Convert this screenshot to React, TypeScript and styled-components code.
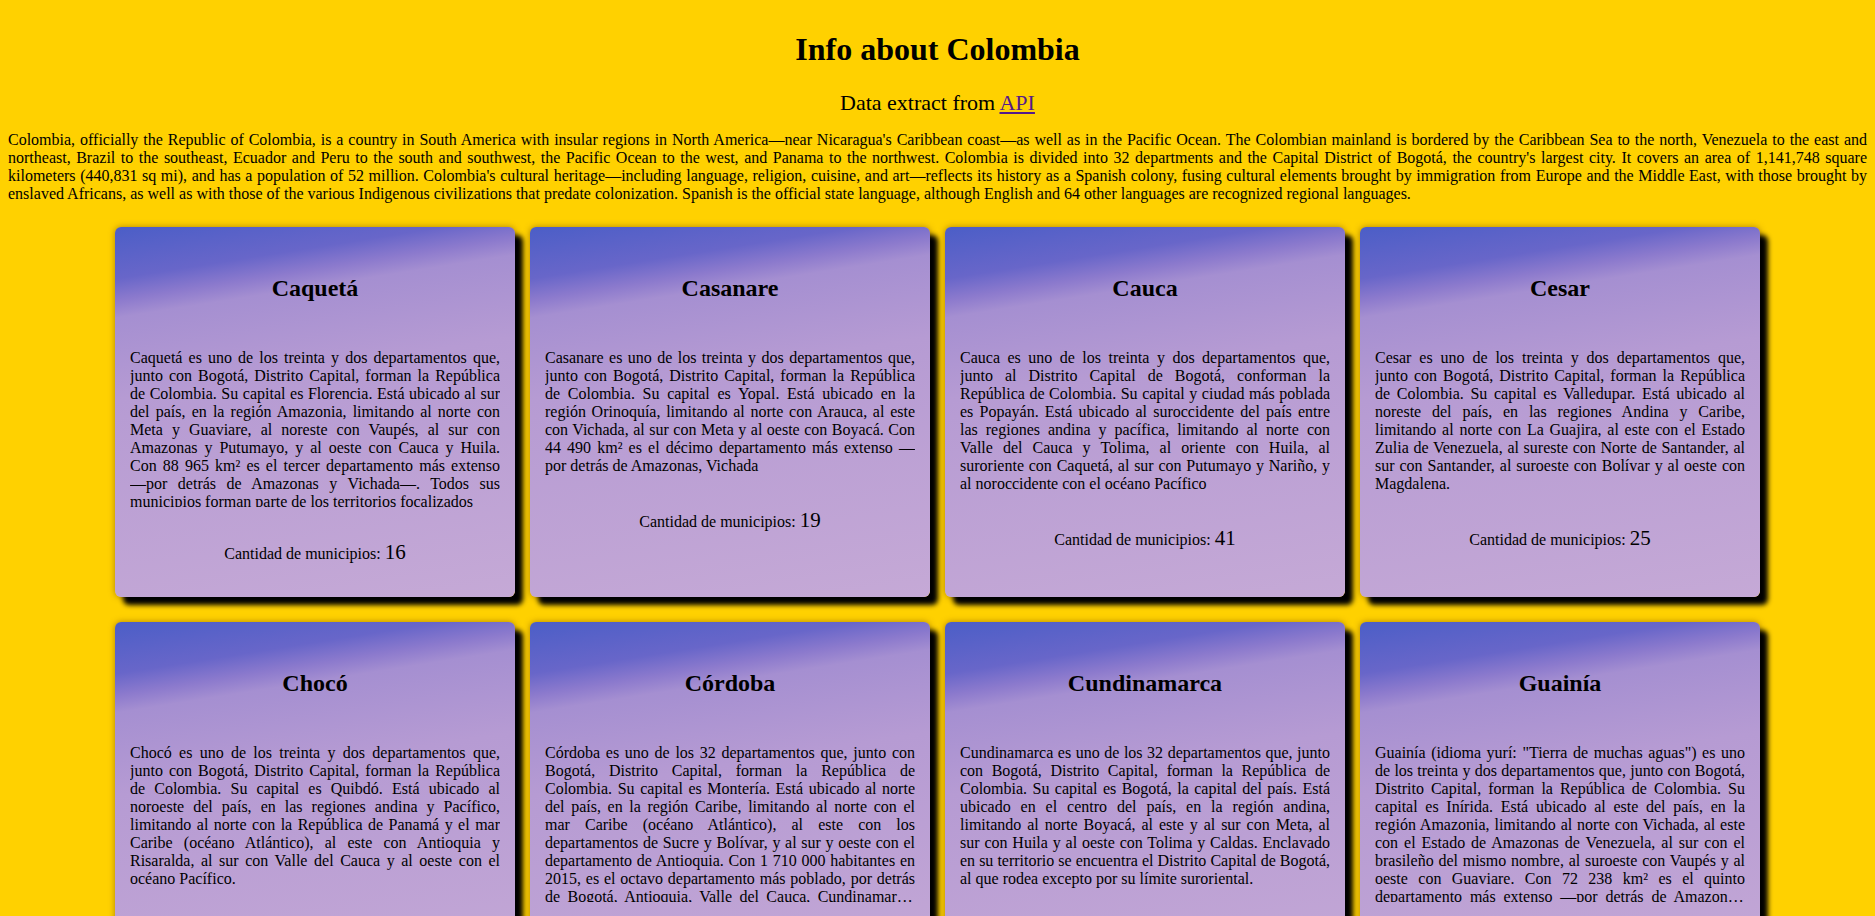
import styled, { createGlobalStyle } from "styled-components"

const GlobalStyle = createGlobalStyle`
    body {
        margin: 0;
        background: #ffd100;
        color: #000;
        font-family: "Liberation Serif", "Times New Roman", serif;
    }
`

const Page = styled.main`
    padding: 0 8px 40px;
`

const Title = styled.h1`
    margin: 31px 0 0;
    font-size: 32px;
    line-height: 37px;
    text-align: center;
`

const Subtitle = styled.p`
    margin: 22px 0 0;
    font-size: 22px;
    line-height: 25px;
    text-align: center;

    a {
        color: #551a8b;
    }
`

const Intro = styled.p`
    margin: 16px 0 0;
    font-size: 16px;
    text-align: justify;
`

const Grid = styled.section`
    display: grid;
    grid-template-columns: repeat(4, 400px);
    justify-content: center;
    gap: 25px 15px;
    margin-top: 24px;
`

const Card = styled.article`
    box-sizing: border-box;
    height: 370px;
    padding: 47px 15px 0;
    border-radius: 6px;
    background: linear-gradient(171deg, #4b5ec7 0%, #6866c9 12%, #8c7acd 17%, #a58fd1 21%, #b69bd3 40%, #c5a9d6 100%);
    box-shadow: 8px 8px 5px #000, 0 0 6px rgba(110, 70, 0, 0.55);
`

const CardTitle = styled.h2`
    margin: 0;
    font-size: 24px;
    line-height: 28px;
    text-align: center;
`

const Description = styled.p`
    margin: 47px 0 0;
    font-size: 16px;
    line-height: 18px;
    text-align: justify;
    display: -webkit-box;
    -webkit-box-orient: vertical;
    -webkit-line-clamp: 9;
    overflow: hidden;
    max-height: 158px;
`

const Count = styled.p`
    margin: 32px 0 0;
    font-size: 16px;
    line-height: 26px;
    text-align: center;

    span {
        font-size: 21px;
    }
`

type Department = {
    name: string
    description: string
    municipalities: number
}

const departments: Department[] = [
    {
        name: "Caquetá",
        description: "Caquetá es uno de los treinta y dos departamentos que, junto con Bogotá, Distrito Capital, forman la República de Colombia. Su capital es Florencia. Está ubicado al sur del país, en la región Amazonia, limitando al norte con Meta y Guaviare, al noreste con Vaupés, al sur con Amazonas y Putumayo, y al oeste con Cauca y Huila. Con 88 965 km² es el tercer departamento más extenso —por detrás de Amazonas y Vichada—. Todos sus municipios forman parte de los territorios focalizados",
        municipalities: 16,
    },
    {
        name: "Casanare",
        description: "Casanare es uno de los treinta y dos departamentos que, junto con Bogotá, Distrito Capital, forman la República de Colombia. Su capital es Yopal. Está ubicado en la región Orinoquía, limitando al norte con Arauca, al este con Vichada, al sur con Meta y al oeste con Boyacá. Con 44 490 km² es el décimo departamento más extenso —por detrás de Amazonas, Vichada",
        municipalities: 19,
    },
    {
        name: "Cauca",
        description: "Cauca es uno de los treinta y dos departamentos que, junto al Distrito Capital de Bogotá, conforman la República de Colombia. Su capital y ciudad más poblada es Popayán. Está ubicado al suroccidente del país entre las regiones andina y pacífica, limitando al norte con Valle del Cauca y Tolima, al oriente con Huila, al suroriente con Caquetá, al sur con Putumayo y Nariño, y al noroccidente con el océano Pacífico",
        municipalities: 41,
    },
    {
        name: "Cesar",
        description: "Cesar es uno de los treinta y dos departamentos que, junto con Bogotá, Distrito Capital, forman la República de Colombia. Su capital es Valledupar. Está ubicado al noreste del país, en las regiones Andina y Caribe, limitando al norte con La Guajira, al este con el Estado Zulia de Venezuela, al sureste con Norte de Santander, al sur con Santander, al suroeste con Bolívar y al oeste con Magdalena.",
        municipalities: 25,
    },
    {
        name: "Chocó",
        description: "Chocó es uno de los treinta y dos departamentos que, junto con Bogotá, Distrito Capital, forman la República de Colombia. Su capital es Quibdó. Está ubicado al noroeste del país, en las regiones andina y Pacífico, limitando al norte con la República de Panamá y el mar Caribe (océano Atlántico), al este con Antioquia y Risaralda, al sur con Valle del Cauca y al oeste con el océano Pacífico.",
        municipalities: 30,
    },
    {
        name: "Córdoba",
        description: "Córdoba es uno de los 32 departamentos que, junto con Bogotá, Distrito Capital, forman la República de Colombia. Su capital es Montería. Está ubicado al norte del país, en la región Caribe, limitando al norte con el mar Caribe (océano Atlántico), al este con los departamentos de Sucre y Bolívar, y al sur y oeste con el departamento de Antioquia. Con 1 710 000 habitantes en 2015, es el octavo departamento más poblado, por detrás de Bogotá, Antioquia, Valle del Cauca, Cundinamarca, Atlántico, Bolívar y Santander.",
        municipalities: 30,
    },
    {
        name: "Cundinamarca",
        description: "Cundinamarca es uno de los 32 departamentos que, junto con Bogotá, Distrito Capital, forman la República de Colombia. Su capital es Bogotá, la capital del país. Está ubicado en el centro del país, en la región andina, limitando al norte Boyacá, al este y al sur con Meta, al sur con Huila y al oeste con Tolima y Caldas. Enclavado en su territorio se encuentra el Distrito Capital de Bogotá, al que rodea excepto por su límite suroriental.",
        municipalities: 116,
    },
    {
        name: "Guainía",
        description: "Guainía (idioma yurí: \"Tierra de muchas aguas\") es uno de los treinta y dos departamentos que, junto con Bogotá, Distrito Capital, forman la República de Colombia. Su capital es Inírida. Está ubicado al este del país, en la región Amazonia, limitando al norte con Vichada, al este con el Estado de Amazonas de Venezuela, al sur con el brasileño del mismo nombre, al suroeste con Vaupés y al oeste con Guaviare. Con 72 238 km² es el quinto departamento más extenso —por detrás de Amazonas, Vichada, Caquetá y Meta—.",
        municipalities: 2,
    },
]

const intro = "Colombia, officially the Republic of Colombia, is a country in South America with insular regions in North America—near Nicaragua's Caribbean coast—as well as in the Pacific Ocean. The Colombian mainland is bordered by the Caribbean Sea to the north, Venezuela to the east and northeast, Brazil to the southeast, Ecuador and Peru to the south and southwest, the Pacific Ocean to the west, and Panama to the northwest. Colombia is divided into 32 departments and the Capital District of Bogotá, the country's largest city. It covers an area of 1,141,748 square kilometers (440,831 sq mi), and has a population of 52 million. Colombia's cultural heritage—including language, religion, cuisine, and art—reflects its history as a Spanish colony, fusing cultural elements brought by immigration from Europe and the Middle East, with those brought by enslaved Africans, as well as with those of the various Indigenous civilizations that predate colonization. Spanish is the official state language, although English and 64 other languages are recognized regional languages."

export default function App() {
    return (
        <>
            <GlobalStyle />
            <Page>
                <Title>Info about Colombia</Title>
                <Subtitle>
                    Data extract from <a href="#api">API</a>
                </Subtitle>
                <Intro>{intro}</Intro>
                <Grid>
                    {departments.map((dep) => (
                        <Card key={dep.name}>
                            <CardTitle>{dep.name}</CardTitle>
                            <Description>{dep.description}</Description>
                            <Count>
                                Cantidad de municipios: <span>{dep.municipalities}</span>
                            </Count>
                        </Card>
                    ))}
                </Grid>
            </Page>
        </>
    )
}
